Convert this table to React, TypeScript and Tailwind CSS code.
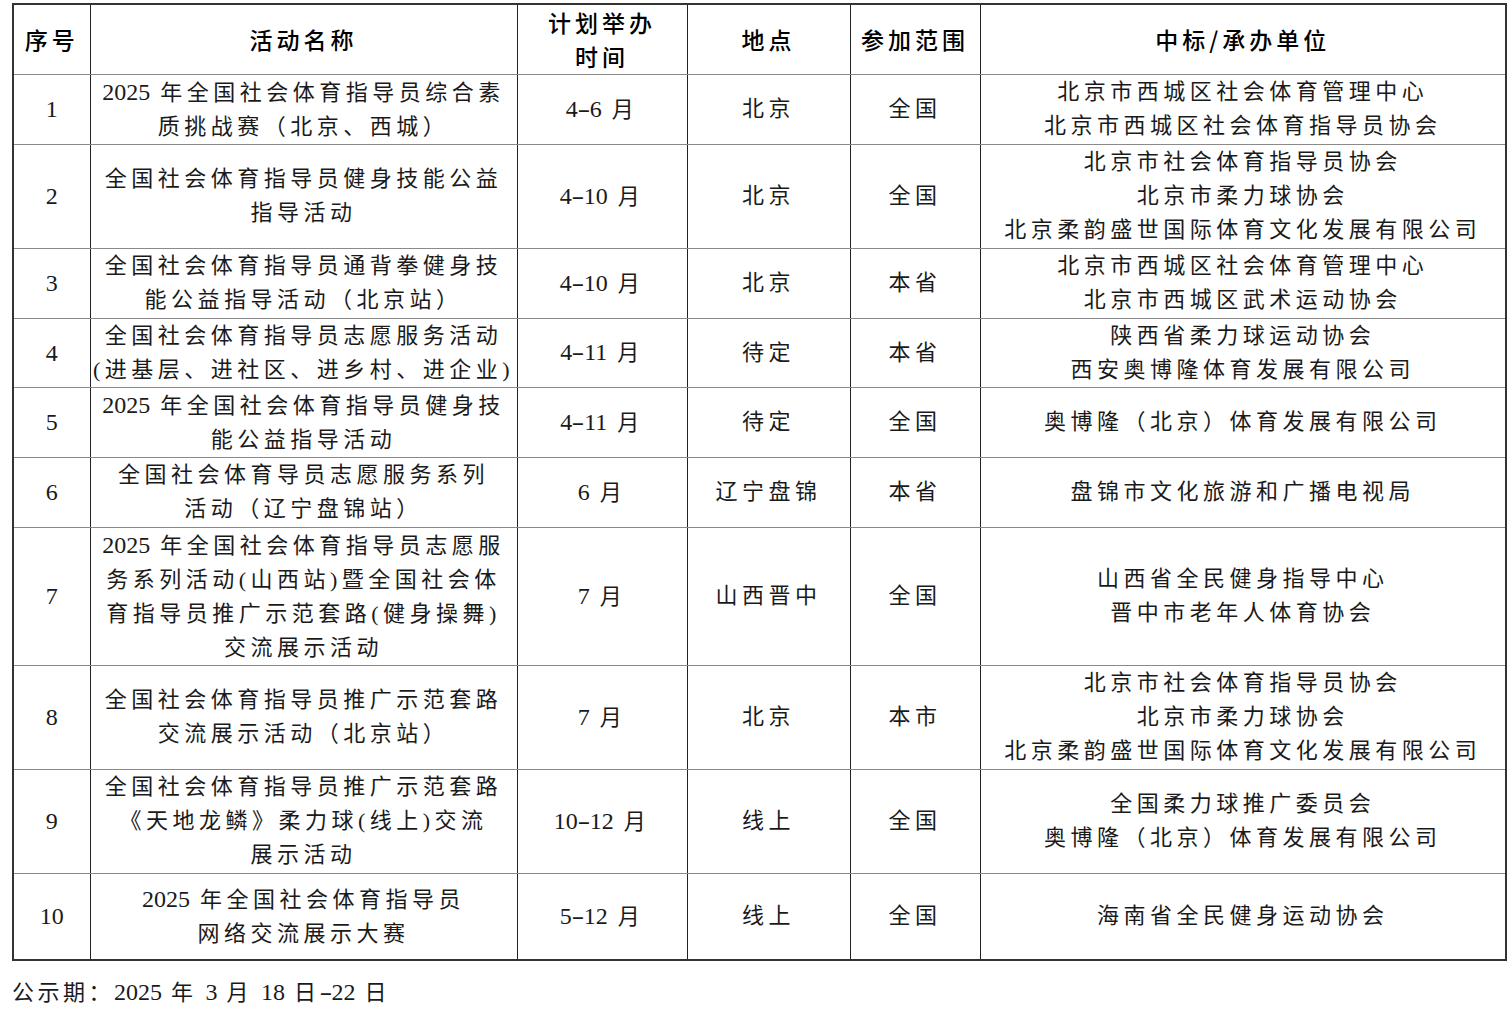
const body = "'Liberation Serif', 'Noto Sans CJK SC', serif"
const head = "'Noto Sans CJK SC', sans-serif"

type Row = {
  no: string
  name: string[]
  time: string
  place: string
  scope: string
  org: string[]
  h: string
}

const rows: Row[] = [
  { no: '1', name: ['2025 年全国社会体育指导员综合素', '质挑战赛（北京、西城）'], time: '4-6 月', place: '北京', scope: '全国', org: ['北京市西城区社会体育管理中心', '北京市西城区社会体育指导员协会'], h: 'h-[70px]' },
  { no: '2', name: ['全国社会体育指导员健身技能公益', '指导活动'], time: '4-10 月', place: '北京', scope: '全国', org: ['北京市社会体育指导员协会', '北京市柔力球协会', '北京柔韵盛世国际体育文化发展有限公司'], h: 'h-[104px]' },
  { no: '3', name: ['全国社会体育指导员通背拳健身技', '能公益指导活动（北京站）'], time: '4-10 月', place: '北京', scope: '本省', org: ['北京市西城区社会体育管理中心', '北京市西城区武术运动协会'], h: 'h-[70px]' },
  { no: '4', name: ['全国社会体育指导员志愿服务活动', '(进基层、进社区、进乡村、进企业)'], time: '4-11 月', place: '待定', scope: '本省', org: ['陕西省柔力球运动协会', '西安奥博隆体育发展有限公司'], h: 'h-[69px]' },
  { no: '5', name: ['2025 年全国社会体育指导员健身技', '能公益指导活动'], time: '4-11 月', place: '待定', scope: '全国', org: ['奥博隆（北京）体育发展有限公司'], h: 'h-[70px]' },
  { no: '6', name: ['全国社会体育导员志愿服务系列', '活动（辽宁盘锦站）'], time: '6 月', place: '辽宁盘锦', scope: '本省', org: ['盘锦市文化旅游和广播电视局'], h: 'h-[70px]' },
  { no: '7', name: ['2025 年全国社会体育指导员志愿服', '务系列活动(山西站)暨全国社会体', '育指导员推广示范套路(健身操舞)', '交流展示活动'], time: '7 月', place: '山西晋中', scope: '全国', org: ['山西省全民健身指导中心', '晋中市老年人体育协会'], h: 'h-[138px]' },
  { no: '8', name: ['全国社会体育指导员推广示范套路', '交流展示活动（北京站）'], time: '7 月', place: '北京', scope: '本市', org: ['北京市社会体育指导员协会', '北京市柔力球协会', '北京柔韵盛世国际体育文化发展有限公司'], h: 'h-[104px]' },
  { no: '9', name: ['全国社会体育指导员推广示范套路', '《天地龙鳞》柔力球(线上)交流', '展示活动'], time: '10-12 月', place: '线上', scope: '全国', org: ['全国柔力球推广委员会', '奥博隆（北京）体育发展有限公司'], h: 'h-[104px]' },
  { no: '10', name: ['2025 年全国社会体育指导员', '网络交流展示大赛'], time: '5-12 月', place: '线上', scope: '全国', org: ['海南省全民健身运动协会'], h: 'h-[87px]' },
]

const cell = 'border-x border-x-[#222] border-y border-y-[#8a8a8a] text-center align-middle p-0'

// digits keep their natural width, only the Chinese text is spaced out
function Txt({ text }: { text: string }) {
  const parts = text.split(/([0-9\-]+)/).filter(Boolean)
  return (
    <>
      {parts.map((p, i) =>
        /^[0-9\-]/.test(p) ? (
          <span key={i} className="tracking-normal text-[24px]">
            {p.split(/(-)/).map((s, j) =>
              s === '-' ? (
                <span key={j} className="inline-block scale-x-[1.6] px-[2px]">
                  -
                </span>
              ) : (
                s
              ),
            )}
          </span>
        ) : (
          <span key={i} className="whitespace-pre">{p}</span>
        ),
      )}
    </>
  )
}

function Lines({ items }: { items: string[] }) {
  return (
    <>
      {items.map((t, i) => (
        <div key={i} className="whitespace-nowrap">
          <Txt text={t} />
        </div>
      ))}
    </>
  )
}

export default function App() {
  return (
    <div className="w-[1512px] h-[1016px] bg-white text-[#1a1a1a] pt-[3px] pl-[12px]">
      <table className="table-fixed border-collapse w-[1493px] border-2 border-[#333]">
        <colgroup>
          <col className="w-[77px]" />
          <col className="w-[427px]" />
          <col className="w-[170px]" />
          <col className="w-[163px]" />
          <col className="w-[130px]" />
          <col className="w-[526px]" />
        </colgroup>
        <thead>
          <tr
            className="h-[70px] text-[23px] leading-[34px] font-medium tracking-[4px] text-black"
            style={{ fontFamily: head }}
          >
            <th className={cell + ' font-medium'}>序号</th>
            <th className={cell + ' font-medium'}>活动名称</th>
            <th className={cell + ' font-medium'}>
              <div>计划举办</div>
              <div>时间</div>
            </th>
            <th className={cell + ' font-medium'}>地点</th>
            <th className={cell + ' font-medium'}>参加范围</th>
            <th className={cell + ' font-medium'}>中标/承办单位</th>
          </tr>
        </thead>
        <tbody className="text-[22px] leading-[34px] tracking-[4.5px]" style={{ fontFamily: body }}>
          {rows.map((r) => (
            <tr key={r.no} className={r.h}>
              <td className={cell + ' tracking-normal text-[24px]'}>{r.no}</td>
              <td className={cell}>
                <Lines items={r.name} />
              </td>
              <td className={cell}>
                <Txt text={r.time} />
              </td>
              <td className={cell}>{r.place}</td>
              <td className={cell}>{r.scope}</td>
              <td className={cell}>
                <Lines items={r.org} />
              </td>
            </tr>
          ))}
        </tbody>
      </table>
      <div
        className="mt-[14px] text-[22px] leading-[34px] tracking-[3.5px] text-[#1a1a1a]"
        style={{ fontFamily: body }}
      >
        <Txt text="公示期：2025 年 3 月 18 日-22 日" />
      </div>
    </div>
  )
}
